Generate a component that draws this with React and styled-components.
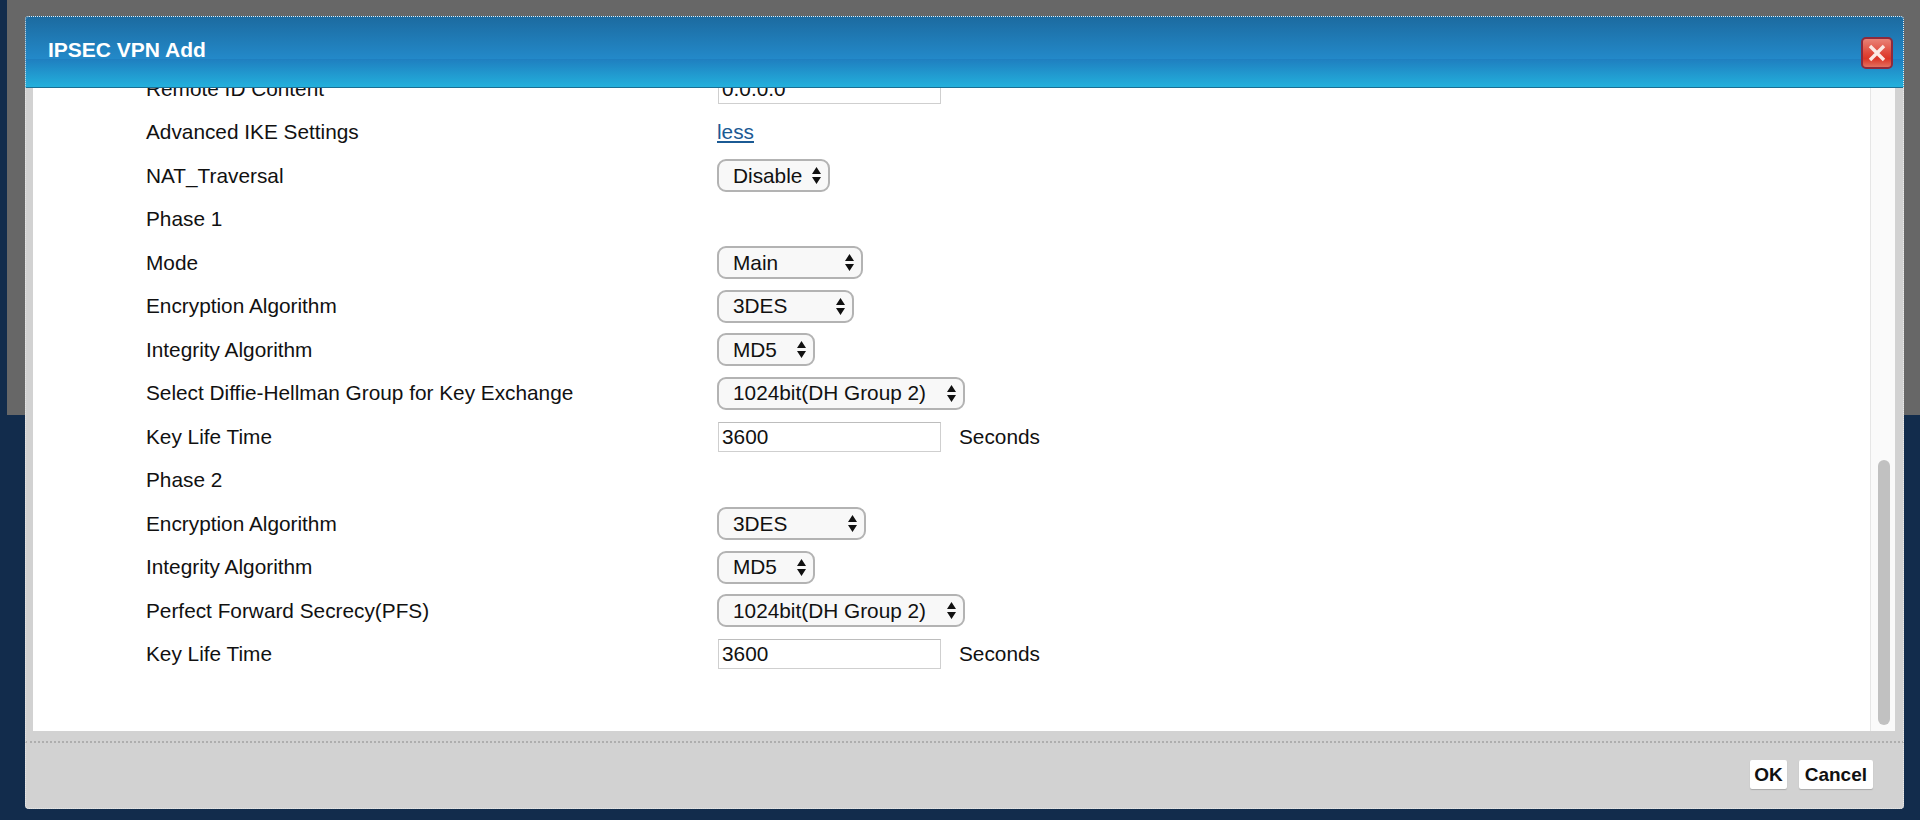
import React from 'react'
import styled, { createGlobalStyle } from 'styled-components'

const GlobalStyle = createGlobalStyle`
  html, body {
    margin: 0;
    height: 100%;
    overflow: hidden;
    background: #122c4c;
  }
  body {
    font-family: "Liberation Sans", Arial, sans-serif;
  }
`

const Page = styled.div`
  position: relative;
  width: 1920px;
  height: 820px;
  background: #122c4c;
  overflow: hidden;
`

const Shade = styled.div`
  position: absolute;
  left: 7px;
  top: 0;
  width: 1913px;
  height: 415px;
  background: #676767;
`

const Modal = styled.div`
  position: absolute;
  left: 25px;
  top: 16px;
  width: 1879px;
  height: 793px;
  display: flex;
  flex-direction: column;
  background: #d2d2d2;
  border-radius: 4px;
  outline: 1px dotted #ececec;
  outline-offset: -1px;
`

const TitleBar = styled.header`
  flex: none;
  height: 72px;
  box-sizing: border-box;
  padding: 0 11px 4px 23px;
  display: flex;
  align-items: center;
  justify-content: space-between;
  border-radius: 4px 4px 0 0;
  border-bottom: 1px solid #1a6f94;
  background: linear-gradient(
    to bottom,
    #1c6a9f 0%,
    #2389c9 60%,
    #1f7fc0 61%,
    #23b0dc 100%
  );
`

const Title = styled.h1`
  margin: 0;
  color: #fff;
  font-size: 21px;
  font-weight: 700;
`

const CloseButton = styled.button`
  width: 32px;
  height: 32px;
  margin-top: 7px;
  padding: 0;
  display: flex;
  align-items: center;
  justify-content: center;
  border: 2px solid #8e2a3c;
  border-radius: 5px;
  background: linear-gradient(to bottom, #e98276 0%, #e0483a 50%, #dc3526 70%, #e3705f 100%);
`

const Body = styled.div`
  flex: none;
  height: 643px;
  margin: 0 9px 0 8px;
  display: flex;
  background: #fff;
`

const Scroller = styled.div`
  flex: 1;
  overflow: hidden;
  padding-left: 113px;
`

const Rows = styled.div`
  margin-top: -21px;
`

const Row = styled.div`
  height: 43.5px;
  display: flex;
  align-items: center;
  font-size: 20.8px;
  color: #111;
`

const Label = styled.div`
  width: 571px;
  flex: none;
`

const TextField = styled.input`
  width: 223px;
  height: 30px;
  box-sizing: border-box;
  margin-left: 1px;
  padding: 0 3px;
  border: 1px solid #cfcfcf;
  border-top-color: #bdbdbd;
  background: #fff;
  font: inherit;
  color: #111;
`

const Unit = styled.span`
  margin-left: 18px;
`

const MoreLink = styled.a`
  color: #1b5a94;
  text-decoration: underline;
`

const Dropdown = styled.div`
  width: ${(p) => p.$width}px;
  height: 33px;
  box-sizing: border-box;
  padding: 0 7px 0 14px;
  display: flex;
  align-items: center;
  justify-content: space-between;
  border: 2px solid #b3b3b3;
  border-radius: 9px;
  background: #f8f8f8;
`

const Track = styled.div`
  flex: none;
  width: 25px;
  box-sizing: border-box;
  padding: 0 5px 6px 7px;
  display: flex;
  flex-direction: column;
  justify-content: flex-end;
  background: #fafafa;
  border-left: 1px solid #e6e6e6;
`

const Thumb = styled.div`
  height: 265px;
  border-radius: 7px;
  background: #c1c1c1;
`

const Footer = styled.footer`
  flex: 1;
  margin-top: 10px;
  padding: 17px 31px 0 0;
  border-top: 2px dotted #aeaeae;
  display: flex;
  align-items: flex-start;
  justify-content: flex-end;
  gap: 12px;
`

const ActionButton = styled.button`
  height: 29px;
  padding: 0 ${(p) => p.$pad}px;
  border: 0;
  border-radius: 2px;
  background: #fff;
  box-shadow: 0 1px 1px #aaa;
  font-family: inherit;
  font-size: 19px;
  font-weight: 700;
  color: #111;
`

const Arrows = () => (
  <svg width="9" height="17" viewBox="0 0 9 17">
    <path d="M4.5 0 L9 7 H0 Z M4.5 17 L0 10 H9 Z" fill="#111" />
  </svg>
)

const Select = ({ value, width }) => (
  <Dropdown $width={width}>
    <span>{value}</span>
    <Arrows />
  </Dropdown>
)

const Lifetime = () => (
  <>
    <TextField defaultValue="3600" />
    <Unit>Seconds</Unit>
  </>
)

const rows = [
  ['Remote ID Content', <TextField key="id" defaultValue="0.0.0.0" />],
  ['Advanced IKE Settings', <MoreLink key="less" href="#">less</MoreLink>],
  ['NAT_Traversal', <Select key="nat" value="Disable" width={113} />],
  ['Phase 1'],
  ['Mode', <Select key="mode" value="Main" width={146} />],
  ['Encryption Algorithm', <Select key="enc1" value="3DES" width={137} />],
  ['Integrity Algorithm', <Select key="int1" value="MD5" width={98} />],
  ['Select Diffie-Hellman Group for Key Exchange', <Select key="dh" value="1024bit(DH Group 2)" width={248} />],
  ['Key Life Time', <Lifetime key="life1" />],
  ['Phase 2'],
  ['Encryption Algorithm', <Select key="enc2" value="3DES" width={149} />],
  ['Integrity Algorithm', <Select key="int2" value="MD5" width={98} />],
  ['Perfect Forward Secrecy(PFS)', <Select key="pfs" value="1024bit(DH Group 2)" width={248} />],
  ['Key Life Time', <Lifetime key="life2" />],
]

const App = () => (
  <Page>
    <GlobalStyle />
    <Shade />
    <Modal>
      <TitleBar>
        <Title>IPSEC VPN Add</Title>
        <CloseButton aria-label="Close">
          <svg width="20" height="20" viewBox="0 0 20 20">
            <path d="M3 3 L17 17 M17 3 L3 17" stroke="#fbe9e4" strokeWidth="3.4" />
          </svg>
        </CloseButton>
      </TitleBar>
      <Body>
        <Scroller>
          <Rows>
            {rows.map(([label, control], i) => (
              <Row key={i}>
                <Label>{label}</Label>
                {control}
              </Row>
            ))}
          </Rows>
        </Scroller>
        <Track>
          <Thumb />
        </Track>
      </Body>
      <Footer>
        <ActionButton $pad={4}>OK</ActionButton>
        <ActionButton $pad={6}>Cancel</ActionButton>
      </Footer>
    </Modal>
  </Page>
)

export default App
